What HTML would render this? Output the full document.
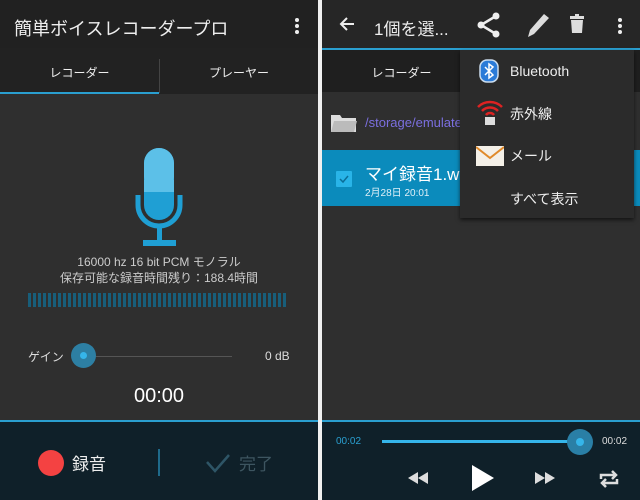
<!DOCTYPE html>
<html><head><meta charset="utf-8"><style>
*{margin:0;padding:0;box-sizing:border-box}
body{width:640px;height:500px;background:#f0f0f0;position:relative;overflow:hidden;font-family:"Liberation Sans","Noto Sans CJK JP",sans-serif;color:#eee}
.a{position:absolute}
.dots{position:absolute;width:4px}
.dots i{display:block;width:4px;height:4px;border-radius:2px;background:#eee;margin-bottom:2px}
</style></head><body>
<!-- LEFT -->
<div class="a" style="left:0;top:0;width:318px;height:500px;background:#2f2f2f">
 <div class="a" style="left:0;top:0;width:318px;height:48px;background:#212121"></div>
 <div class="a" style="left:14px;top:15px;font-size:18px;color:#eee">簡単ボイスレコーダープロ</div>
 <div class="dots" style="left:295px;top:18px"><i></i><i></i><i></i></div>
 <div class="a" style="left:0;top:48px;width:318px;height:46px;background:#222"></div>
 <div class="a" style="left:159px;top:59px;width:1px;height:34px;background:#444"></div>
 <div class="a" style="left:0;top:64px;width:159px;text-align:center;font-size:12px">レコーダー</div>
 <div class="a" style="left:160px;top:64px;width:158px;text-align:center;font-size:12px">プレーヤー</div>
 <div class="a" style="left:0;top:92px;width:159px;height:2px;background:#2a9fd0"></div>
 <svg class="a" style="left:130px;top:145px" width="60" height="105" viewBox="0 0 60 105">
  <rect x="14" y="3" width="30" height="72" rx="15" fill="#1f9fd4"/>
  <rect x="14" y="3" width="30" height="44" rx="15" fill="#5cc0e8"/>
  <rect x="14" y="35" width="30" height="12" fill="#5cc0e8"/>
  <path d="M8 50 V60 A21 21 0 0 0 50 60 V50" fill="none" stroke="#1f9fd4" stroke-width="5"/>
  <rect x="27" y="81" width="5" height="16" fill="#1f9fd4"/>
  <rect x="13" y="95" width="33" height="6" fill="#1f9fd4"/>
 </svg>
 <div class="a" style="left:0;top:254px;width:318px;text-align:center;font-size:12px;color:#ccc;line-height:16px">16000 hz 16 bit PCM モノラル<br>保存可能な録音時間残り：188.4時間</div>
 <div class="a" style="left:28px;top:293px;width:258px;height:14px;background:repeating-linear-gradient(90deg,#185e7a 0 3px,transparent 3px 5px)"></div>
 <div class="a" style="left:28px;top:348px;font-size:12px;color:#ddd">ゲイン</div>
 <div class="a" style="left:84px;top:356px;width:148px;height:1px;background:#555"></div>
 <div class="a" style="left:71px;top:343px;width:25px;height:25px;border-radius:50%;background:#2d7fa3"></div>
 <div class="a" style="left:80px;top:352px;width:7px;height:7px;border-radius:50%;background:#35b5ea"></div>
 <div class="a" style="left:265px;top:349px;font-size:12px;color:#ddd">0 dB</div>
 <div class="a" style="left:0;top:385px;width:318px;text-align:center;font-size:20px;color:#fff">00:00</div>
 <div class="a" style="left:0;top:420px;width:318px;height:80px;background:#0f2029;border-top:2px solid #2a9fd0"></div>
 <div class="a" style="left:38px;top:450px;width:26px;height:26px;border-radius:50%;background:#f44242"></div>
 <div class="a" style="left:72px;top:450px;font-size:17px;color:#eee">録音</div>
 <div class="a" style="left:158px;top:449px;width:2px;height:27px;background:#1f6a8a"></div>
 <svg class="a" style="left:205px;top:452px" width="26" height="22"><path d="M2 10 L10 19 L24 3" fill="none" stroke="#2e5566" stroke-width="2.5"/></svg>
 <div class="a" style="left:239px;top:450px;font-size:17px;color:#3d5560">完了</div>
</div>
<!-- RIGHT -->
<div class="a" style="left:322px;top:0;width:318px;height:500px;background:#2f2f2f">
 <div class="a" style="left:0;top:0;width:318px;height:48px;background:#262626"></div>
 <div class="a" style="left:0;top:48px;width:318px;height:2px;background:#2a9fd0"></div>
 <svg class="a" style="left:16px;top:16px" width="18" height="16"><path d="M16 8H3M9 2L3 8l6 6" fill="none" stroke="#eee" stroke-width="2"/></svg>
 <div class="a" style="left:52px;top:15px;font-size:17px">1個を選...</div>
 <svg class="a" style="left:155px;top:12px" width="24" height="26"><circle cx="19" cy="4" r="3.5" fill="#eee"/><circle cx="4" cy="13" r="3.5" fill="#eee"/><circle cx="19" cy="22" r="3.5" fill="#eee"/><path d="M19 4L4 13L19 22" stroke="#eee" stroke-width="2.5" fill="none"/></svg>
 <svg class="a" style="left:203px;top:12px" width="24" height="26"><path d="M19 2L24 6 9 22 3 25 5 18Z" fill="#ddd"/></svg>
 <svg class="a" style="left:248px;top:14px" width="14" height="20"><rect x="0" y="2" width="14" height="3" fill="#ddd"/><rect x="5" y="0" width="4" height="3" fill="#ddd"/><path d="M1 6h12l-1 13H2z" fill="#ddd"/></svg>
 <div class="dots" style="left:296px;top:18px"><i></i><i></i><i></i></div>
 <div class="a" style="left:0;top:50px;width:318px;height:42px;background:#1f1f1f"></div>
 <div class="a" style="left:0;top:64px;width:159px;text-align:center;font-size:12px">レコーダー</div>
 <svg class="a" style="left:8px;top:113px" width="28" height="20"><path d="M1 2h9l2 3h14v14H1z" fill="#ddd"/><path d="M4 8h23l-3 11H1z" fill="#bbb"/></svg>
 <div class="a" style="left:43px;top:115px;font-size:13px;color:#7b6fe0">/storage/emulate</div>
 <div class="a" style="left:0;top:150px;width:318px;height:56px;background:#0b8bbc"></div>
 <div class="a" style="left:14px;top:171px;width:16px;height:16px;background:#29b4e8;border-radius:1px"></div>
 <svg class="a" style="left:16px;top:173px" width="12" height="12"><path d="M2 6l3 3 5-6" stroke="#0b6e98" stroke-width="1.5" fill="none"/></svg>
 <div class="a" style="left:43px;top:160px;font-size:17px;color:#fff">マイ録音1.wa</div>
 <div class="a" style="left:43px;top:184px;font-size:10px;color:#e0f0f8">2月28日 20:01</div>
 <div class="a" style="left:138px;top:50px;width:174px;height:168px;background:#2b2b2b;box-shadow:0 2px 4px rgba(0,0,0,.6)"></div>
 <svg class="a" style="left:157px;top:59px" width="20" height="24"><rect x="1" y="1" width="18" height="22" rx="7" fill="#2b7bd8" stroke="#cde" stroke-width="1.5"/><path d="M6 8l8 8-4 3V5l4 3-8 8" stroke="#fff" stroke-width="1.5" fill="none"/></svg>
 <div class="a" style="left:188px;top:63px;font-size:14px">Bluetooth</div>
 <svg class="a" style="left:154px;top:98px" width="28" height="30"><path d="M2 9A17 17 0 0 1 26 9M6 13A11 11 0 0 1 22 13M10 17A5 5 0 0 1 18 17" stroke="#d22" stroke-width="2.5" fill="none"/><rect x="9" y="19" width="10" height="8" fill="#ddd"/></svg>
 <div class="a" style="left:188px;top:104px;font-size:14px">赤外線</div>
 <svg class="a" style="left:154px;top:146px" width="28" height="20"><rect x="0" y="0" width="28" height="20" fill="#f4f0e8"/><path d="M0 1l14 11L28 1" stroke="#e08a2a" stroke-width="2" fill="none"/></svg>
 <div class="a" style="left:188px;top:146px;font-size:14px">メール</div>
 <div class="a" style="left:188px;top:189px;font-size:14px">すべて表示</div>
 <div class="a" style="left:0;top:420px;width:318px;height:80px;background:#0f2029;border-top:2px solid #2a9fd0"></div>
 <div class="a" style="left:14px;top:436px;font-size:10px;color:#2a9fd0">00:02</div>
 <div class="a" style="left:60px;top:440px;width:196px;height:3px;background:#35b5ea"></div>
 <div class="a" style="left:245px;top:429px;width:26px;height:26px;border-radius:50%;background:#2a7fa6"></div>
 <div class="a" style="left:254px;top:438px;width:8px;height:8px;border-radius:50%;background:#35b5ea"></div>
 <div class="a" style="left:280px;top:436px;font-size:10px;color:#ddd">00:02</div>
 <svg class="a" style="left:86px;top:472px" width="20" height="12"><path d="M10 0v12L0 6zM20 0v12L10 6z" fill="#ddd"/></svg>
 <svg class="a" style="left:150px;top:465px" width="22" height="26"><path d="M0 0v26l22-13z" fill="#fff"/></svg>
 <svg class="a" style="left:213px;top:472px" width="20" height="12"><path d="M0 0v12l10-6zM10 0v12l10-6z" fill="#ddd"/></svg>
 <svg class="a" style="left:276px;top:469px" width="22" height="20"><path d="M3 10V6h14M14 2l4 4-4 4M19 10v4H5M8 18l-4-4 4-4" stroke="#ddd" stroke-width="2.5" fill="none"/></svg>
</div>
</body></html>
